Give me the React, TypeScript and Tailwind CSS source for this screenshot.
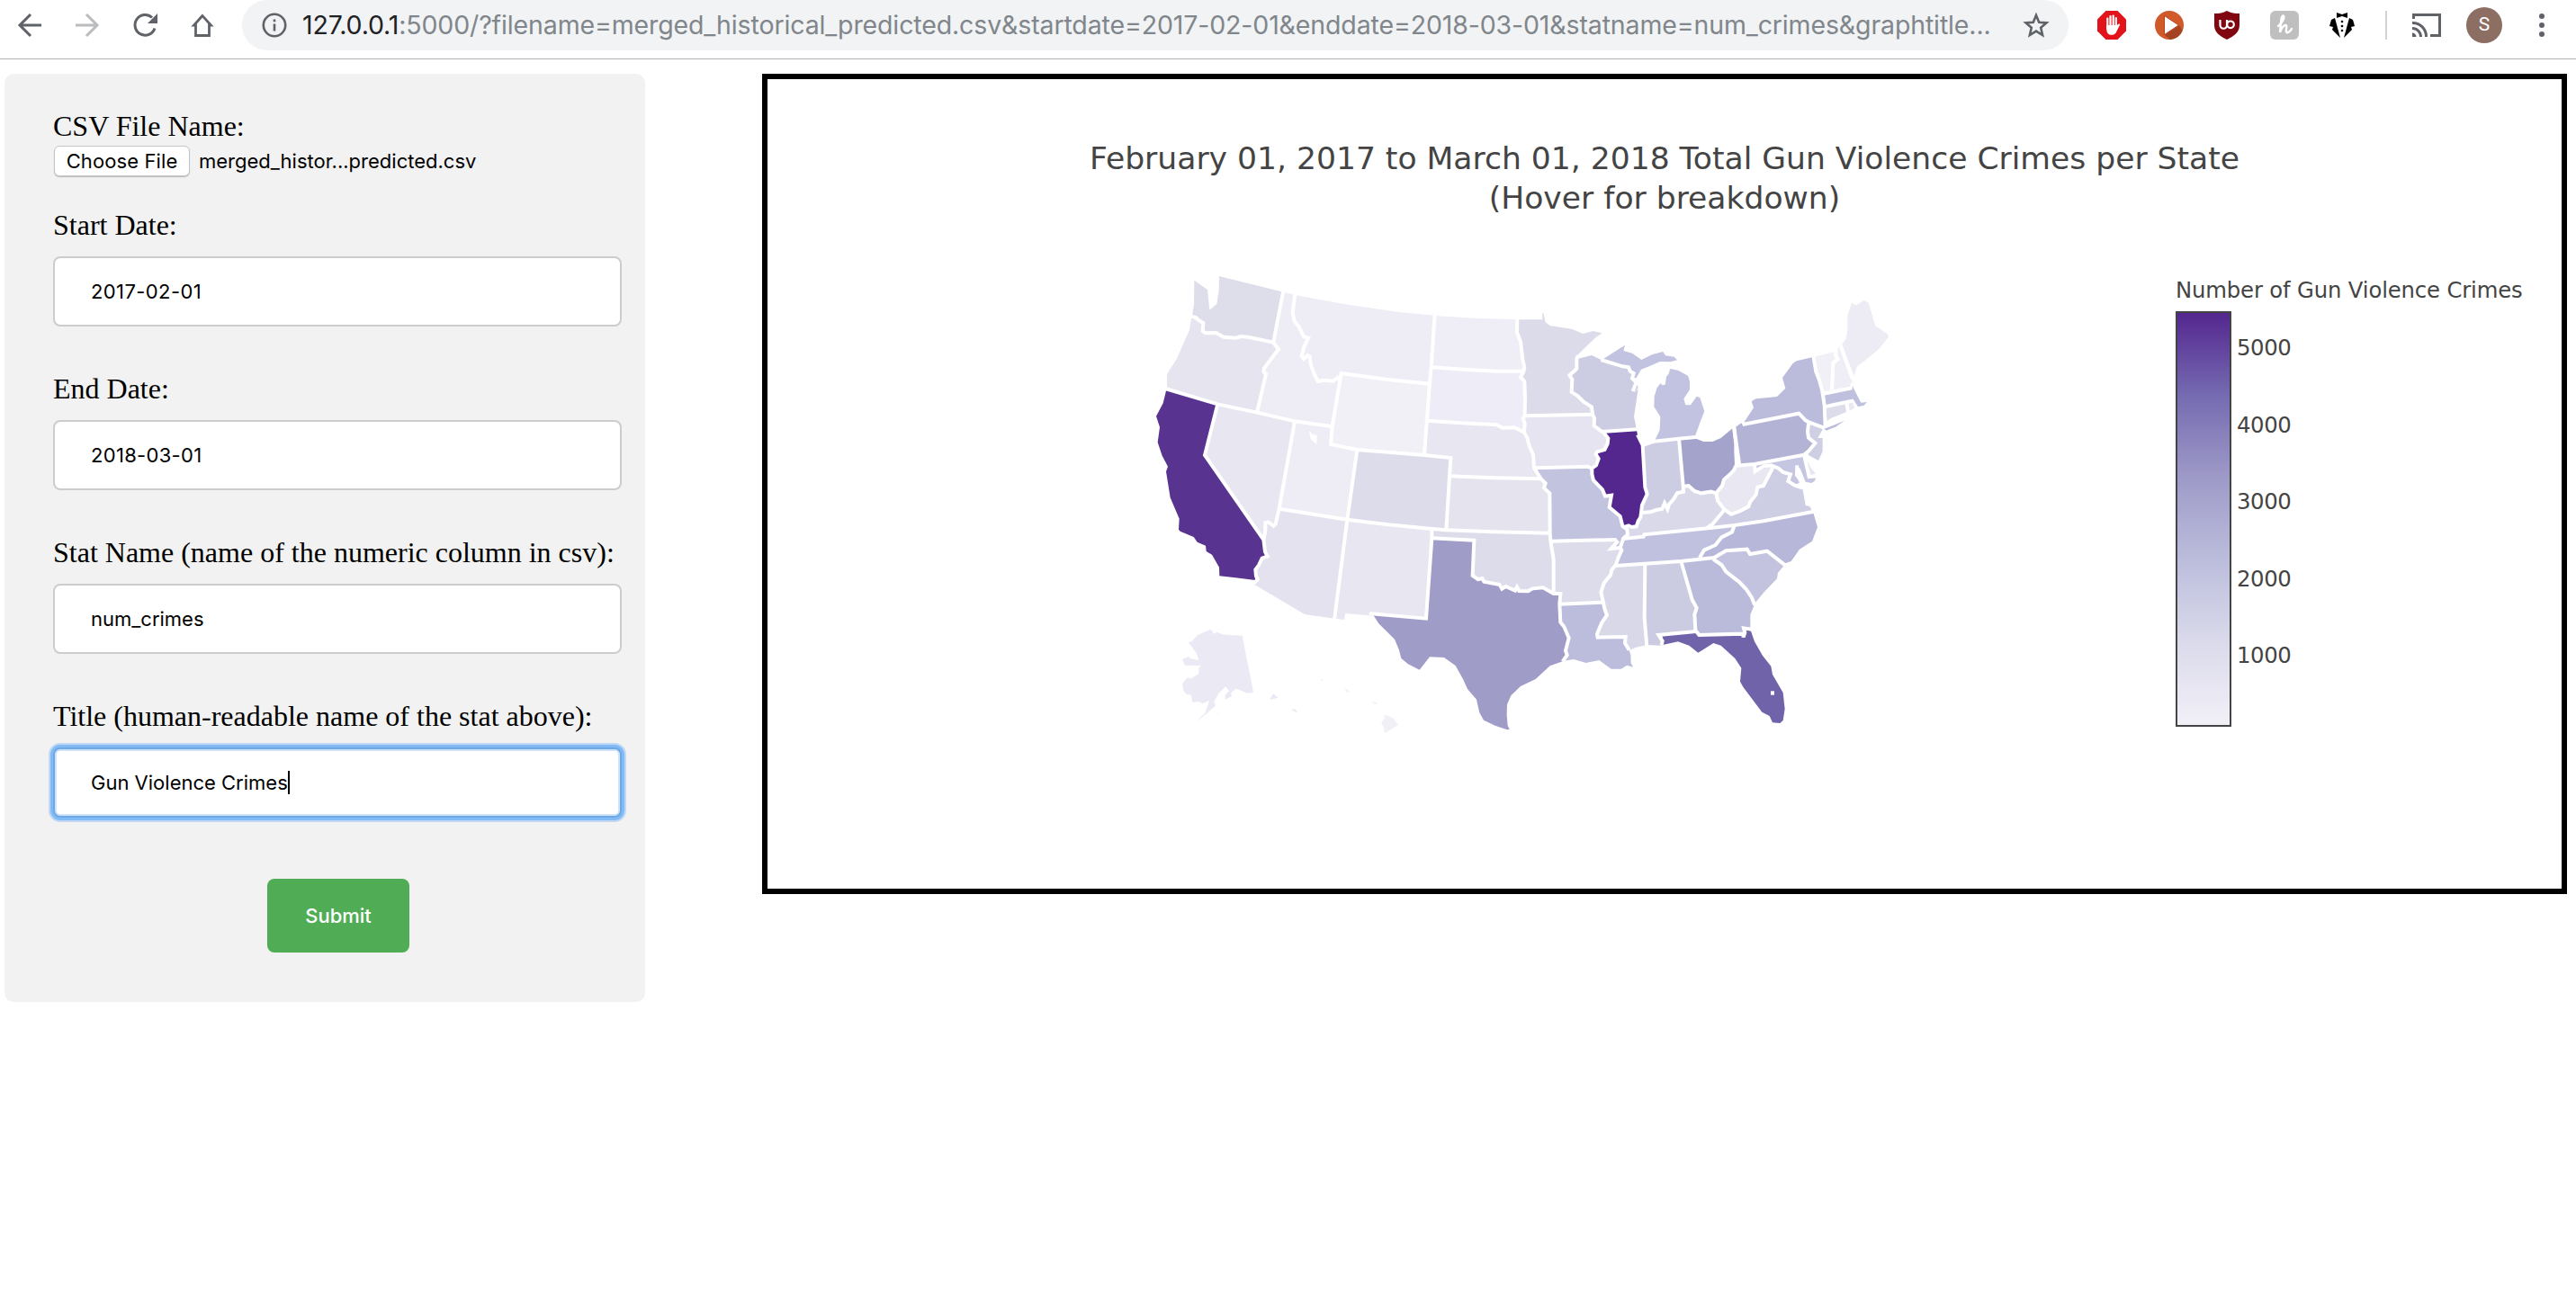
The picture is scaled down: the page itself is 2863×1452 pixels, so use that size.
import type { ReactNode } from "react";

/**
 * Map geometry
 * State shapes share their inner edges, so they are painted as plain fills
 * first and the white borders are stroked over them afterwards.
 */
const states = [
  { id: "WA", fill: "#dedeeb", points: "202,95 246,126 253,194 277,174 284,130 285,81 499,134 465,302 385,285 358,282 340,287 300,284 275,270 240,271 230,264 232,237 218,229 195,212 201,175" },
  { id: "OR", fill: "#e5e4ef", points: "193,215 207,219 218,229 232,237 230,264 240,271 275,270 300,284 340,287 358,282 385,285 465,302 483,325 435,388 433,400 441,408 411,536 280,508 111,457 111,408 143,358 186,260" },
  { id: "CA", fill: "#583390", points: "109,460 98,505 75,548 87,585 80,635 95,680 114,716 108,733 122,820 152,890 150,926 155,932 200,951 212,968 240,980 242,999 261,1010 285,1052 286,1081 340,1087 405,1095 406,1060 417,1045 428,1022 446,1016 438,1000 433,960 237,678 280,508" },
  { id: "NV", fill: "#e8e6f1", points: "280,508 537,565 483,860 473,910 466,915 450,902 439,903 439,930 433,960 237,678" },
  { id: "ID", fill: "#eeedf5", points: "499,134 538,143 530,200 536,232 550,248 568,284 582,287 567,320 560,348 567,357 580,345 587,350 590,375 600,403 614,432 635,428 665,431 680,420 690,430 662,583 537,565 411,536 441,408 433,400 435,388 483,325 465,302" },
  { id: "MT", fill: "#eeedf6", points: "538,144 700,174 880,200 1003,212 992,385 987,440 840,425 692,405 690,430 680,420 665,431 635,428 614,432 600,403 590,375 587,350 580,345 567,357 560,348 567,320 582,287 568,284 550,248 536,232 530,200" },
  { id: "WY", fill: "#f1f0f6", points: "692,405 840,425 987,440 969,678 745,660 657,642" },
  { id: "UT", fill: "#eeecf5", points: "537,565 662,583 657,642 745,660 712,893 485,857" },
  { id: "CO", fill: "#dddcea", points: "745,660 969,678 1057,687 1053,748 1042,927 994,924 712,893" },
  { id: "AZ", fill: "#e4e2ee", points: "485,857 712,893 669,1223 570,1209 403,1110 414,1092 408,1082 406,1060 417,1045 428,1022 446,1016 438,1000 433,960 439,930 439,903 450,902 466,915 473,905" },
  { id: "NM", fill: "#e8e6f1", points: "712,893 994,924 975,1223 787,1213 706,1206 702,1227 669,1223" },
  { id: "ND", fill: "#efeef7", points: "1003,213 1135,221 1280,226 1278,268 1290,300 1297,360 1303,385 1300,398 1210,398 1100,392 992,385" },
  { id: "SD", fill: "#eeecf6", points: "992,385 1100,392 1210,398 1300,398 1290,418 1303,432 1305,490 1304,547 1298,555 1304,572 1302,602 1270,586 1230,587 1210,577 1090,571 980,563" },
  { id: "NE", fill: "#e8e6f1", points: "980,563 1090,571 1210,577 1230,587 1270,586 1302,602 1312,620 1320,650 1332,677 1335,721 1358,757 1200,754 1053,748 1057,687 969,678" },
  { id: "KS", fill: "#e4e3ee", points: "1053,748 1200,754 1358,757 1373,772 1368,787 1387,805 1388,937 1200,934 1042,927" },
  { id: "OK", fill: "#dddcea", points: "994,925 1042,928 1200,934 1388,937 1390,965 1400,1025 1400,1140 1365,1120 1330,1123 1315,1132 1285,1131 1272,1130 1240,1116 1228,1124 1220,1110 1168,1100 1148,1092 1130,1080 1135,962 994,955" },
  { id: "TX", fill: "#a09cc8", points: "994,955 1135,962 1130,1080 1148,1092 1168,1100 1220,1110 1228,1124 1240,1116 1272,1130 1285,1131 1315,1132 1330,1123 1365,1120 1400,1140 1423,1140 1420,1175 1423,1235 1435,1250 1451,1288 1440,1330 1445,1345 1430,1366 1388,1381 1340,1425 1290,1449 1258,1480 1245,1510 1244,1545 1247,1580 1253,1592 1245,1594 1205,1580 1167,1562 1153,1537 1143,1493 1113,1458 1098,1425 1073,1380 1035,1353 987,1351 953,1394 915,1375 892,1356 885,1328 870,1292 817,1240 797,1208 975,1223" },
  { id: "MN", fill: "#dcdbe9", points: "1280,226 1363,226 1363,205 1367,205 1372,233 1387,246 1460,257 1498,273 1532,264 1562,271 1540,286 1482,342 1477,357 1477,390 1453,412 1462,425 1460,468 1480,480 1500,500 1527,517 1530,542 1304,547 1305,490 1303,432 1290,418 1303,385 1297,360 1290,300 1278,268" },
  { id: "IA", fill: "#e6e4f0", points: "1304,547 1530,542 1536,555 1535,580 1555,595 1582,622 1580,640 1570,660 1545,667 1541,675 1550,690 1542,712 1528,722 1515,716 1336,721 1332,677 1320,650 1312,620 1302,602 1304,572 1298,555" },
  { id: "MO", fill: "#c2c3df", points: "1336,721 1515,716 1528,722 1528,742 1533,762 1563,793 1572,815 1593,812 1586,852 1622,882 1630,915 1645,925 1647,943 1633,955 1622,987 1592,990 1612,968 1605,960 1390,965 1388,937 1387,805 1368,787 1373,772 1358,757" },
  { id: "AR", fill: "#dddceb", points: "1390,965 1605,960 1612,968 1592,990 1622,987 1627,995 1617,1018 1607,1045 1594,1060 1590,1078 1568,1105 1558,1135 1566,1170 1420,1175 1423,1140 1400,1140 1400,1025" },
  { id: "LA", fill: "#bcbddc", points: "1420,1175 1566,1169 1570,1190 1578,1212 1560,1238 1545,1275 1547,1286 1640,1284 1638,1305 1652,1328 1657,1345 1658,1372 1665,1385 1645,1379 1625,1391 1592,1391 1552,1362 1508,1371 1467,1359 1430,1365 1445,1345 1440,1330 1451,1288 1435,1250 1423,1235" },
  { id: "WI", fill: "#cccce2", points: "1480,357 1527,345 1562,362 1630,382 1650,385 1655,398 1667,405 1662,422 1676,435 1680,455 1668,472 1682,458 1668,550 1677,594 1565,601 1555,595 1535,580 1536,555 1530,542 1527,517 1500,500 1480,480 1460,468 1462,425 1453,412 1477,390" },
  { id: "WI-door", fill: "#cccce2", points: "1655,460 1668,472 1682,452 1676,435" },
  { id: "IL", fill: "#54278f", points: "1565,603 1677,595 1680,612 1692,640 1705,785 1712,808 1695,845 1690,885 1676,916 1660,918 1640,920 1630,915 1622,882 1586,852 1593,812 1572,815 1563,793 1533,762 1528,722 1550,690 1541,675 1570,660 1582,622" },
  { id: "MI-upper", fill: "#c2c3e0", points: "1566,357 1638,311 1633,330 1662,338 1693,360 1730,342 1765,333 1773,346 1802,350 1812,361 1790,367 1755,366 1715,383 1692,392 1676,420 1662,422 1667,405 1655,398 1650,385 1630,382 1562,362" },
  { id: "MI", fill: "#c2c3e0", points: "1788,390 1815,395 1848,413 1854,432 1854,460 1834,490 1840,511 1857,511 1877,482 1888,486 1903,532 1888,570 1872,614 1818,623 1738,628 1754,595 1756,550 1735,517 1736,482 1745,453 1757,438 1762,445 1772,443 1776,417 1785,405" },
  { id: "IN", fill: "#cccce2", points: "1697,645 1735,632 1818,623 1832,780 1833,800 1812,805 1800,825 1785,842 1780,858 1770,838 1762,857 1742,861 1722,868 1692,870 1695,845 1712,808 1705,785" },
  { id: "OH", fill: "#a4a3cb", points: "1818,626 1875,623 1900,633 1930,633 1958,621 2000,586 2008,665 2010,710 2000,730 1985,745 1968,760 1962,780 1942,805 1925,800 1892,805 1870,798 1850,780 1832,782" },
  { id: "KY", fill: "#dad9e9", points: "1832,782 1850,780 1870,798 1892,805 1925,800 1942,805 1947,830 1970,860 1930,908 1912,920 1702,945 1700,950 1647,952 1647,922 1676,916 1692,870 1722,868 1742,861 1762,857 1770,838 1780,858 1785,842 1800,825 1812,805 1833,800" },
  { id: "TN", fill: "#c0c1de", points: "1633,957 1700,950 1702,943 1930,920 2003,912 1995,935 1960,952 1940,978 1902,995 1887,1025 1825,1032 1705,1040 1605,1047 1617,1018 1627,995" },
  { id: "MS", fill: "#d9d8e8", points: "1605,1047 1705,1040 1703,1220 1711,1311 1672,1320 1656,1328 1638,1305 1640,1284 1547,1286 1545,1275 1560,1238 1578,1212 1570,1190 1558,1135 1568,1105 1590,1078 1594,1060" },
  { id: "AL", fill: "#cbcbe1", points: "1705,1040 1825,1032 1862,1160 1877,1188 1870,1210 1874,1266 1750,1278 1763,1298 1760,1313 1711,1311 1703,1220" },
  { id: "GA", fill: "#babbdb", points: "1825,1032 1935,1020 1932,1025 1960,1044 1975,1067 2020,1102 2042,1125 2060,1152 2069,1178 2056,1210 2056,1258 2034,1255 2030,1274 1885,1278 1873,1262 1870,1210 1877,1188 1862,1160" },
  { id: "FL", fill: "#7063a9", points: "1763,1281 1876,1267 1886,1279 2030,1274 2036,1260 2057,1262 2070,1300 2097,1347 2125,1382 2130,1410 2165,1470 2171,1525 2165,1563 2155,1572 2130,1570 2120,1548 2095,1535 2033,1453 2022,1433 2026,1388 2005,1356 1958,1313 1933,1305 1882,1337 1852,1313 1815,1300 1764,1311" },
  { id: "SC", fill: "#c4c3df", points: "1935,1020 1975,997 2045,992 2055,1008 2112,998 2170,1045 2148,1070 2145,1090 2100,1137 2073,1170 2060,1152 2042,1125 2020,1102 1975,1067 1960,1044 1932,1025" },
  { id: "NC", fill: "#b7b7d9", points: "2003,912 2100,898 2265,867 2280,918 2262,965 2220,992 2192,1032 2172,1039 2112,998 2055,1008 2045,992 1975,997 1935,1020 1887,1025 1902,995 1940,978 1960,952 1995,935" },
  { id: "VA", fill: "#cdcde3", points: "2130,722 2150,722 2165,735 2190,742 2182,765 2203,780 2230,788 2240,845 2255,850 2262,866 2100,898 2003,912 1912,920 1930,908 1970,860 1992,875 2020,865 2050,850 2055,835 2075,810 2080,785 2100,780" },
  { id: "WV", fill: "#e9e7f2", points: "2010,712 2070,708 2072,735 2100,720 2125,712 2130,722 2100,780 2080,785 2075,810 2055,835 2050,850 2020,865 1992,875 1970,860 1947,830 1942,805 1962,780 1968,760 1985,745 2000,730" },
  { id: "MD", fill: "#c5c6e1", points: "2070,708 2232,680 2250,750 2275,752 2270,765 2260,771 2240,767 2222,722 2210,715 2208,745 2220,770 2203,778 2182,765 2190,742 2165,735 2150,722 2125,712 2072,735" },
  { id: "DE", fill: "#e8e6f2", points: "2238,682 2245,695 2258,720 2274,740 2250,747" },
  { id: "PA", fill: "#b3b3d6", points: "2005,586 2026,571 2030,577 2218,539 2240,562 2250,575 2247,600 2250,620 2272,638 2250,665 2235,677 2022,712" },
  { id: "NJ", fill: "#cfcfe4", points: "2252,572 2298,590 2281,621 2297,621 2297,665 2283,696 2250,678 2250,665 2272,638 2250,620" },
  { id: "NY", fill: "#bbbcdc", points: "2036,567 2067,520 2060,498 2075,490 2145,483 2173,455 2163,420 2198,372 2210,364 2265,351 2275,400 2285,425 2295,460 2303,583 2250,572 2218,539 2036,573" },
  { id: "NY-long-island", fill: "#bbbcdc", points: "2302,590 2330,580 2370,563 2340,584 2310,596" },
  { id: "VT", fill: "#f1f0f7", points: "2267,350 2340,332 2346,358 2330,372 2328,464 2300,470 2295,460 2285,425 2275,400" },
  { id: "NH", fill: "#efeef6", points: "2345,330 2355,308 2396,420 2396,430 2386,452 2328,464 2330,372 2346,358" },
  { id: "ME", fill: "#edecf5", points: "2361,308 2374,292 2380,260 2380,213 2394,170 2410,178 2435,161 2450,170 2473,247 2512,273 2518,283 2485,323 2445,357 2412,382 2402,415" },
  { id: "MA", fill: "#bfc0de", points: "2304,478 2395,457 2397,448 2408,470 2425,503 2445,501 2435,512 2415,517 2400,493 2306,515" },
  { id: "CT", fill: "#dddcea", points: "2306,518 2375,504 2378,533 2325,555 2312,565" },
  { id: "RI", fill: "#eae9f3", points: "2378,503 2395,500 2404,520 2384,533" },
  { id: "AK", fill: "#ebe9f4", points: "183,1303 195,1298 213,1278 235,1268 258,1259 268,1275 277,1268 295,1276 330,1279 362,1280 399,1469 378,1472 343,1457 325,1470 327,1482 304,1494 305,1478 318,1465 307,1450 283,1473 268,1500 273,1513 240,1543 205,1570 238,1538 252,1497 230,1506 215,1500 196,1502 192,1478 175,1475 165,1462 162,1440 180,1419 190,1424 217,1407 217,1387 225,1380 170,1379 162,1358 185,1350 187,1356 217,1362 210,1340" },
  { id: "AK-kodiak", fill: "#ebe9f4", points: "272,1545 285,1536 280,1542" },
  { id: "AK-east", fill: "#ebe9f4", points: "465,1474 482,1487 454,1494" },
  { id: "AK-south", fill: "#ebe9f4", points: "526,1524 540,1526 545,1535 535,1534" },
  { id: "HI-kauai", fill: "#f1f0f7", points: "620,1426 630,1425 629,1431" },
  { id: "HI-oahu", fill: "#f1f0f7", points: "704,1457 713,1460 720,1469 709,1468" },
  { id: "HI-maui", fill: "#f1f0f7", points: "792,1499 810,1504 812,1510 802,1507" },
  { id: "HI", fill: "#f1f0f7", points: "834,1543 865,1555 882,1578 837,1606 834,1586 825,1568 837,1557" },
];

const borders = [
  // Pacific and mountain states
  "190,214 207,219 218,229 232,237 230,264 240,271 275,270 300,284 340,287 358,282 385,285 465,302",
  "499,130 468,290 465,302 483,325 435,388 433,400 441,408 411,536",
  "105,456 280,508 411,536 537,565 662,583",
  "538,140 530,200 536,232 550,248 568,284 582,287 567,320 560,348 567,357 580,345 587,350 590,375 600,403 614,432 635,428 665,431 680,420 690,430",
  "987,440 840,425 692,405 662,583 657,642 745,660 969,678 1057,687 1053,748 1042,927",
  "280,508 237,678 433,960 438,1000 446,1016 428,1022 417,1045 406,1060 408,1082 414,1092 402,1104",
  "537,565 485,857 473,908 466,914 450,902 439,903 439,930 433,960",
  "485,857 712,893 850,910 994,924 1042,928 1200,934 1388,938",
  "745,660 712,893 669,1228",
  "994,924 994,955 975,1223 792,1207 787,1203",
  // Great Plains
  "1004,208 992,385 987,440 969,678",
  "992,385 1100,392 1210,398 1300,398",
  "1279,222 1278,268 1290,300 1297,360 1303,385 1300,400 1290,418 1303,432 1305,490 1304,547 1298,555 1304,572 1302,602 1312,620 1320,650 1332,677 1335,721 1358,757 1373,772 1368,787 1387,805 1388,937 1390,965 1400,1025 1400,1140",
  "980,563 1090,571 1210,577 1230,587 1270,586 1302,602",
  "1053,748 1200,754 1358,757",
  "994,955 1135,962 1130,1080 1148,1092 1162,1089 1168,1100 1220,1110 1228,1124 1240,1116 1272,1130 1278,1118 1285,1131 1315,1132 1330,1123 1365,1120 1400,1140 1423,1140 1420,1175 1423,1235 1435,1250 1451,1288 1440,1330 1445,1345 1430,1366",
  // Mississippi basin
  "1304,547 1530,542",
  "1482,345 1477,357 1477,390 1453,412 1462,425 1460,468 1480,480 1500,500 1527,517 1530,542 1536,555 1535,580 1555,595 1567,603 1582,622 1580,640 1570,660 1545,667 1541,675 1550,690 1542,712 1528,722 1528,742 1533,762 1563,793 1572,815 1593,812 1586,852 1622,882 1630,915 1645,925 1647,943 1633,955 1622,987 1627,995 1617,1018 1607,1045 1594,1060 1590,1078 1568,1105 1558,1135 1566,1170 1570,1190 1578,1212 1560,1238 1545,1275 1547,1286 1640,1284 1638,1305 1652,1328",
  "1336,721 1515,716 1528,724",
  "1390,965 1605,960 1612,968 1592,990 1622,987",
  "1420,1175 1566,1169",
  "1560,600 1680,592",
  "1558,360 1630,382 1650,385 1655,398 1667,405 1662,422 1676,435 1664,465",
  // Ohio valley
  "1680,610 1697,645 1705,785 1712,808 1695,845 1692,870 1690,885 1682,898 1676,916 1660,918 1650,913 1636,918",
  "1697,645 1735,632 1818,623 1880,617",
  "1818,623 1832,780 1833,800 1812,805 1800,825 1785,842 1780,858 1770,838 1762,857 1742,861 1722,868 1692,870",
  "1832,782 1850,780 1870,798 1892,805 1925,800 1942,805 1947,830 1970,860 1930,908 1912,920",
  "2001,582 2008,640 2008,665 2010,710 2000,730 1985,745 1968,760 1962,780 1942,805",
  "2001,582 2020,713",
  "1630,957 1700,950 1702,943 1930,920 2003,912 2100,898 2268,866",
  "1970,860 1992,875 2020,865 2050,850 2055,835 2075,810 2080,785 2100,780 2130,722",
  // Southeast
  "1605,1047 1705,1040 1825,1032 1935,1020 1975,997 2045,992 2055,1008 2112,998 2172,1045",
  "2003,912 1995,935 1960,952 1940,978 1902,995 1887,1020",
  "1705,1040 1703,1220 1711,1316",
  "1825,1032 1862,1160 1877,1188 1870,1210 1873,1262 1885,1278 2030,1274 2033,1285 2038,1270 2034,1255 2060,1259",
  "1875,1266 1750,1278 1763,1298 1760,1312",
  "1932,1025 1960,1044 1975,1067 2020,1102 2042,1125 2060,1152 2071,1178",
  // Mid-Atlantic and New England
  "2010,713 2070,708 2235,677",
  "2070,708 2072,732 2100,715 2125,712 2150,722 2165,735 2190,742 2182,765 2203,778 2232,788",
  "2212,712 2211,745 2235,772",
  "2235,677 2252,750 2278,748",
  "2030,576 2218,539 2240,562 2255,570 2300,586",
  "2250,572 2247,600 2250,620 2272,638 2250,665 2235,677",
  "2266,346 2275,400 2285,425 2295,460 2303,510 2306,583",
  "2342,328 2340,345 2348,358 2332,370 2328,464",
  "2301,473 2395,454",
  "2303,517 2400,496",
  "2377,503 2383,540",
  "2354,305 2394,418 2404,430",
];

const ticks = ["5000", "4000", "3000", "2000", "1000"];

function CrimeMap() {
  return (
    <svg className="w-[860px] h-[560px] shrink-0" viewBox="0 0 2580 1680">
      {states.map(({ id, fill, points }) => (
        <polygon key={id} points={points} fill={fill} />
      ))}
      <g fill="none" stroke="#fff" strokeWidth="12" strokeLinejoin="miter" strokeMiterlimit="3">
        {borders.map((points) => (
          <polyline key={points} points={points} />
        ))}
      </g>
      {/* Great Salt Lake and Lake Okeechobee */}
      <polygon points="585,596 597,609 611,612 610,643 590,625" fill="#fff" />
      <rect x="2124" y="1465" width="12" height="13" fill="#fff" />
    </svg>
  );
}

function ColorBar() {
  return (
    <div className="font-['DejaVu_Sans',sans-serif] text-[#444]">
      <p className="text-[24.3px] leading-[30px] tracking-[-0.14px] whitespace-nowrap">
        Number of Gun Violence Crimes
      </p>
      <div className="mt-2 flex gap-[6px]">
        <div className="w-[62px] h-[462px] border-2 border-[#444] bg-[linear-gradient(to_top,#f2f0f7_0%,#dadaeb_20%,#bcbddc_40%,#9e9ac8_60%,#756bb1_80%,#54278f_100%)]" />
        <div className="pt-[26px] flex flex-col gap-[55.5px] text-[24.4px] leading-[30px] tracking-[-0.4px]">
          {ticks.map((tick) => (
            <span key={tick}>{tick}</span>
          ))}
        </div>
      </div>
    </div>
  );
}

function NavIcon({ children, faded }: { children: ReactNode; faded?: boolean }) {
  return (
    <svg
      className={faded ? "size-8 shrink-0 text-[#babcbe]" : "size-8 shrink-0 text-[#5f6368]"}
      viewBox="0 0 32 32"
      fill="none"
      stroke="currentColor"
      strokeWidth="3"
    >
      {children}
    </svg>
  );
}

function Toolbar() {
  return (
    <header className="flex h-[66px] items-start border-b border-[#b3b3b3] bg-white pl-[17px]">
      <div className="mt-3 flex gap-8">
        <NavIcon>
          <path d="M29 16H6M17 4 5 16l12 12" />
        </NavIcon>
        <NavIcon faded>
          <path d="M3 16h23M15 4l12 12-12 12" />
        </NavIcon>
        <NavIcon>
          <path d="M27 19.5A11.3 11.3 0 1 1 24 7.5" />
          <path d="M30 3v11H19z" fill="currentColor" stroke="none" />
        </NavIcon>
        <NavIcon>
          <path d="M16 5.5 6.5 16H8.500V27.500H23.500V16H25.500Z" strokeWidth="2.800" />
        </NavIcon>
      </div>

      <div className="ml-7 flex h-14 w-[2030px] items-center rounded-full bg-[#f1f3f4] pl-[22px] pr-[21px]">
        <svg className="size-7 shrink-0" viewBox="0 0 28 28" fill="none" stroke="#5f6368" strokeWidth="2.600">
          <circle cx="14" cy="14" r="12.200" />
          <path d="M14 12.500v8M14 7.500v2.800" />
        </svg>
        <span className="ml-[17px] font-['Inter',sans-serif] text-[28.5px] tracking-[-0.13px] whitespace-nowrap text-[#80868b]">
          <span className="text-[#202124]">127.0.0.1</span>
          :5000/?filename=merged_historical_predicted.csv&amp;startdate=2017-02-01&amp;enddate=2018-03-01&amp;statname=num_crimes&amp;graphtitle...
        </span>
        <svg className="ml-auto size-[30px] shrink-0" viewBox="0 0 30 30" fill="none" stroke="#5f6368" strokeWidth="2.600">
          <path d="m15 4 3.200 7.700 8.300.7-6.300 5.400 1.900 8.200L15 21.600 7.900 26l1.900-8.200-6.300-5.400 8.300-.7z" />
        </svg>
      </div>

      <div className="mt-3 ml-8 flex items-center gap-8">
        <svg className="size-8" viewBox="0 0 32 32">
          <path d="M9.500 0h13L32 9.500v13L22.500 32h-13L0 22.500v-13z" fill="#e3131b" />
          <path d="M11.300 20V8.500M14.500 17V6M17.700 17V5.500M20.800 18V8" stroke="#fff" strokeWidth="2.200" strokeLinecap="round" />
          <path d="M10.200 16h11.700l2-1.500c1-.3 1.500.6 1 1.500l-4 8c-1.500 3.500-8 4-10 0-.7-1.500-.7-5-.7-8z" fill="#fff" />
        </svg>
        <svg className="size-8" viewBox="0 0 32 32">
          <circle cx="16" cy="16" r="16" fill="#d15a2b" />
          <path d="m27 16 3.500 6A16 16 0 0 1 17 32l-6-5z" fill="#a34322" />
          <path d="M10.500 5.500v21L26.500 16z" fill="#fff" stroke="#b9431c" strokeWidth="1" />
        </svg>
        <svg className="size-8" viewBox="0 0 32 32">
          <path d="M16 0c4 2.700 9 3 14 3v13c0 8-6 12-14 16C8 28 2 24 2 16V3c5 0 10-.3 14-3z" fill="#800610" />
          <path d="M8.500 10v6a3.700 3.700 0 0 0 7.500 0v-6" fill="none" stroke="#fff" strokeWidth="2.200" />
          <circle cx="20" cy="15.300" r="3.800" fill="none" stroke="#fff" strokeWidth="2.200" />
        </svg>
        <svg className="size-8" viewBox="0 0 32 32">
          <rect width="32" height="32" rx="6" fill="#bfbfbf" />
          <path d="M9 17c5-3 8-11 5.500-11.500C12 5.500 12 15 11 24c1.500-5 4.500-8.500 6.500-8 2.500.8-1.500 8 1.500 8.200 2 0 3.800-2 5-4.200" fill="none" stroke="#fff" strokeWidth="2.400" strokeLinecap="round" />
        </svg>
        <svg className="size-8" viewBox="0 0 32 32">
          <path d="m10 2 6 2 6-2v6l-6-2-6 2zM8 8l6 22L5 21l1-3-4-1 2-7zM24 8l-6 22 9-9-1-3 4-1-2-7z" fill="#000" />
          <circle cx="16" cy="12" r="1.300" />
          <circle cx="16" cy="17" r="1.300" />
          <circle cx="16" cy="22" r="1.300" />
        </svg>
        <div className="h-8 w-0.5 bg-[#d0d2d4]" />
      </div>

      <svg className="mt-3 ml-7 size-8" viewBox="0 0 32 32" fill="none" stroke="#5f6368" strokeWidth="3">
        <path d="M1.500 9V4.500h29v23H20" />
        <path d="M0 13.500A15 15 0 0 1 15.500 29M0 19.500A9.500 9.500 0 0 1 9.500 29" />
        <path d="M0 24.500A4.500 4.500 0 0 1 4.500 29H0z" fill="#5f6368" stroke="none" />
      </svg>
      <div className="mt-2 ml-7 flex size-10 items-center justify-center rounded-full bg-[#8d6e63] font-['Roboto',sans-serif] text-[21px] text-white">
        S
      </div>
      <div className="mt-[15px] ml-[41px] flex flex-col gap-1">
        <span className="size-1.5 rounded-full bg-[#5f6368]" />
        <span className="size-1.5 rounded-full bg-[#5f6368]" />
        <span className="size-1.5 rounded-full bg-[#5f6368]" />
      </div>
    </header>
  );
}

type FieldProps = {
  label: string;
  value: string;
  tracking?: string;
  focused?: boolean;
};

function Field({ label, value, tracking = "tracking-normal", focused }: FieldProps) {
  return (
    <div className="h-[182px]">
      <p className="h-[53px] text-[32px] leading-[37px] whitespace-nowrap">{label}</p>
      <div
        className={
          focused
            ? "flex h-[78px] items-center rounded-lg border-2 border-[#6ea9e6] bg-white pl-10 shadow-[0_0_0_3px_#82baf5,0_0_0_5px_#c0d8f3,inset_0_0_0_2px_#cfe4fb]"
            : "flex h-[78px] items-center rounded-lg border-2 border-[#ccc] bg-white pl-10"
        }
      >
        <span className={`font-['Inter',sans-serif] text-[22px] ${tracking}`}>{value}</span>
        {focused && <span className="h-[26px] w-0.5 bg-black" />}
      </div>
    </div>
  );
}

function StatForm() {
  return (
    <form className="h-[1032px] w-[712px] shrink-0 rounded-[10px] bg-[#f2f2f2] pt-10 pr-[26px] pl-[54px] font-['Liberation_Serif',serif] text-black">
      <p className="text-[32px] leading-[37px]">CSV File Name:</p>
      <div className="mt-[3px] mb-9 flex h-[34px] items-center font-['Inter',sans-serif] text-[22px]">
        <span className="ml-px flex h-[34px] w-[151px] items-center justify-center rounded-md border border-[#c5c5c5] bg-white tracking-[0.1px] shadow-[0_1px_1px_#bbb]">
          Choose File
        </span>
        <span className="ml-[10px]">merged_histor...predicted.csv</span>
      </div>
      <Field label="Start Date:" value="2017-02-01" tracking="tracking-[0.4px]" />
      <Field label="End Date:" value="2018-03-01" tracking="tracking-[0.3px]" />
      <Field label="Stat Name (name of the numeric column in csv):" value="num_crimes" />
      <Field label="Title (human-readable name of the stat above):" value="Gun Violence Crimes" focused />
      <div className="mt-[17px] ml-[238px] flex h-[82px] w-[158px] items-center justify-center rounded-lg bg-[#50ad55] font-['Inter',sans-serif] text-[22px] font-medium text-white">
        Submit
      </div>
    </form>
  );
}

export default function App() {
  return (
    <div className="h-[1452px] w-[2863px] overflow-hidden bg-white">
      <Toolbar />
      <main className="flex items-start pt-4 pl-[5px]">
        <StatForm />
        <section className="ml-[130px] h-[912px] w-[2006px] border-[6px] border-black">
          <h1 className="mt-[66px] text-center font-['DejaVu_Sans',sans-serif] text-[34.55px] leading-[44px] text-[#444]">
            February 01, 2017 to March 01, 2018 Total Gun Violence Crimes per State
            <br />
            (Hover for breakdown)
          </h1>
          <div className="mt-[38px] flex items-start pl-[407px]">
            <CrimeMap />
            <div className="mt-7 ml-[298px]">
              <ColorBar />
            </div>
          </div>
        </section>
      </main>
    </div>
  );
}
